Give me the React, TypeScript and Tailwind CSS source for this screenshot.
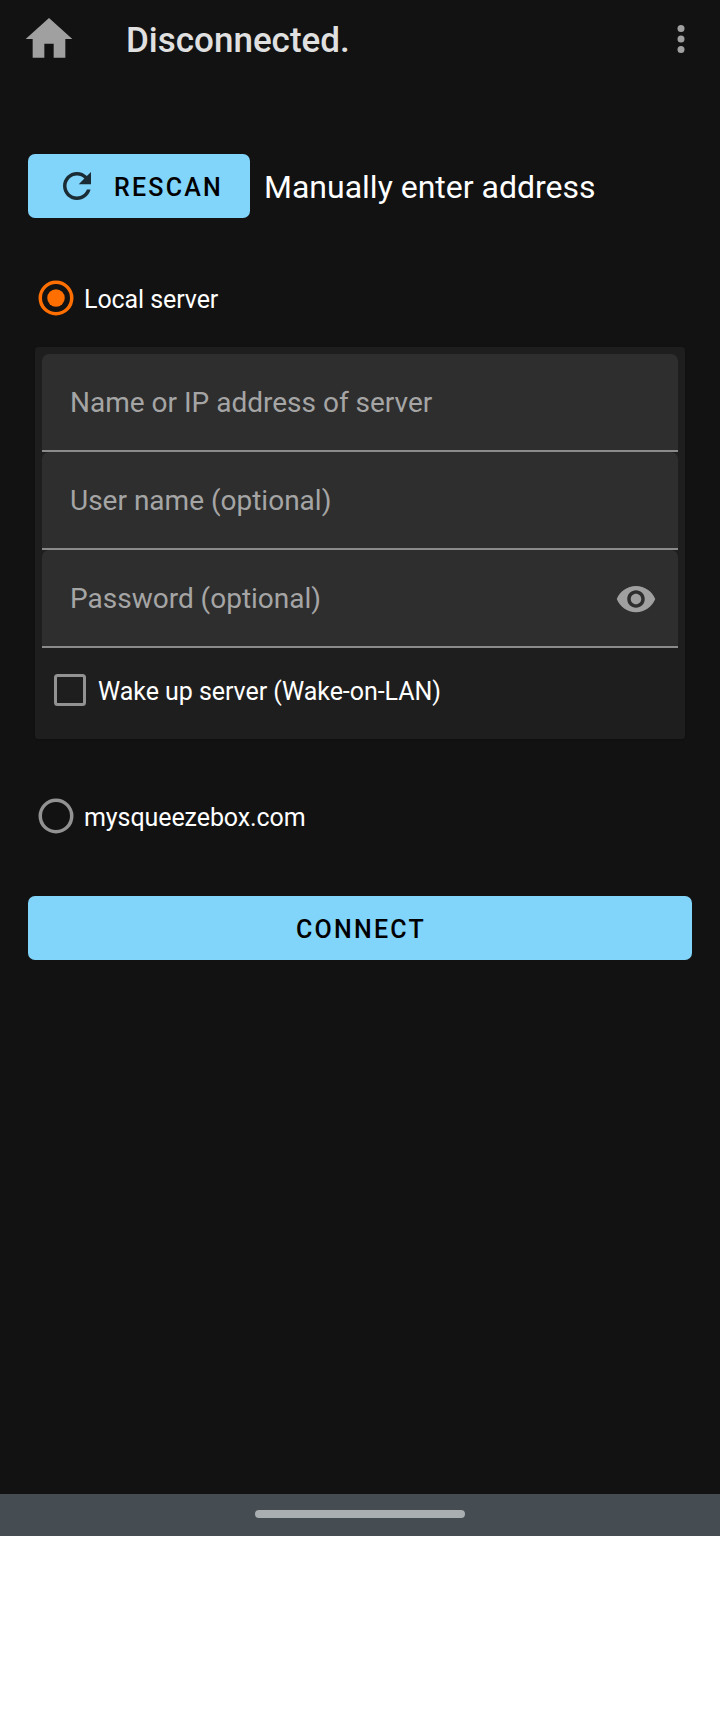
import React from "react";

function Radio({ checked, label }: { checked?: boolean; label: string }) {
  return (
    <label className="flex h-14 items-center pl-[35px]">
      <svg viewBox="0 0 24 24" className={checked ? "size-[42px] shrink-0 text-[#ff6f00]" : "size-[42px] shrink-0 text-[#929292]"}>
        <circle cx="12" cy="12" r="9" fill="none" stroke="currentColor" strokeWidth="2" />
        {checked && <circle cx="12" cy="12" r="5" fill="currentColor" />}
      </svg>
      <span className="ml-[7px] pt-1 text-[25px] leading-[30px] tracking-[-0.08px] text-white">{label}</span>
    </label>
  );
}

function Field({ label, children }: { label: string; children?: React.ReactNode }) {
  return (
    <div className="flex h-[98px] items-center justify-between rounded-t-[7px] border-b-2 border-[#8a8a8a] bg-[#2e2e2e] pt-[2px] pr-[21px] pl-7">
      <span className="text-[28px] leading-[34px] text-[#a5a5a5]">{label}</span>
      {children}
    </div>
  );
}

export default function App() {
  return (
    <div className="flex h-[1712px] w-[720px] flex-col bg-white font-['Roboto',sans-serif]">
      <div className="flex h-[1494px] flex-col bg-[#121212]">
        <header className="flex h-[78px] items-center pr-[18px] pl-[21px]">
          <svg viewBox="0 0 24 24" className="size-14 text-[#a0a0a0]" fill="currentColor">
            <path d="M10 20v-6h4v6h5v-8h3L12 3 2 12h3v8z" />
          </svg>
          <h1 className="ml-[49px] flex-1 pt-1 text-[35px] leading-[42px] font-medium text-[#e0e0e0]">Disconnected.</h1>
          <svg viewBox="0 0 24 24" className="size-[42px] text-[#a0a0a0]" fill="currentColor">
            <circle cx="12" cy="6" r="2" />
            <circle cx="12" cy="12" r="2" />
            <circle cx="12" cy="18" r="2" />
          </svg>
        </header>

        <main className="flex flex-col pt-[76px]">
          <div className="flex h-16 items-center px-7">
            <button className="flex h-16 w-[222px] items-center rounded-[7px] bg-[#81d4fa] pl-7 text-black">
              <svg viewBox="0 0 24 24" className="size-[42px] shrink-0 text-[#1b2c34]" fill="currentColor">
                <path d="M17.65 6.35C16.2 4.9 14.21 4 12 4c-4.42 0-7.99 3.58-7.99 8s3.57 8 7.99 8c3.73 0 6.84-2.55 7.73-6h-2.08c-.82 2.33-3.04 4-5.65 4-3.31 0-6-2.69-6-6s2.69-6 6-6c1.66 0 3.14.69 4.22 1.78L13 11h7V4l-2.35 2.35z" />
              </svg>
              <span className="ml-4 pt-1 text-[25px] leading-[30px] font-medium tracking-[2.23px]">RESCAN</span>
            </button>
            <span className="ml-[14px] pt-[2px] text-[32px] leading-[38px] whitespace-nowrap text-white">Manually enter address</span>
          </div>

          <div className="pt-[52px]">
            <Radio checked label="Local server" />
          </div>

          <section className="mx-[35px] mt-[21px] flex h-[392px] flex-col rounded-[3.5px] bg-[#1e1e1e] p-[7px] shadow-[0_1px_2px_rgba(0,0,0,0.2)]">
            <Field label="Name or IP address of server" />
            <Field label="User name (optional)" />
            <Field label="Password (optional)">
              <svg viewBox="0 0 24 24" className="size-[42px] text-[#a0a0a0]" fill="currentColor">
                <path d="M12 4.5C7 4.5 2.73 7.61 1 12c1.73 4.39 6 7.5 11 7.5s9.27-3.11 11-7.5c-1.73-4.39-6-7.5-11-7.5zM12 17c-2.76 0-5-2.24-5-5s2.24-5 5-5 5 2.24 5 5-2.24 5-5 5zm0-8c-1.66 0-3 1.34-3 3s1.34 3 3 3 3-1.34 3-3-1.34-3-3-3z" />
              </svg>
            </Field>
            <label className="flex h-[84px] items-center pl-3">
              <span className="size-8 rounded-[3.5px] border-[3.5px] border-[#929292]" />
              <span className="ml-3 pt-1 text-[25px] leading-[30px] tracking-[-0.05px] text-white">Wake up server (Wake-on-LAN)</span>
            </label>
          </section>

          <div className="pt-[49px]">
            <Radio label="mysqueezebox.com" />
          </div>

          <button className="mx-7 mt-[52px] flex h-16 items-center justify-center rounded-[7px] bg-[#81d4fa] pt-1 pl-[2px] text-[25px] leading-[30px] font-medium tracking-[2.23px] text-black">
            CONNECT
          </button>
        </main>
      </div>
      <nav className="flex h-[42px] justify-center bg-[#454d52] pt-4">
        <div className="h-2 w-[210px] rounded-full bg-[#a9aeb1]" />
      </nav>
    </div>
  );
}
